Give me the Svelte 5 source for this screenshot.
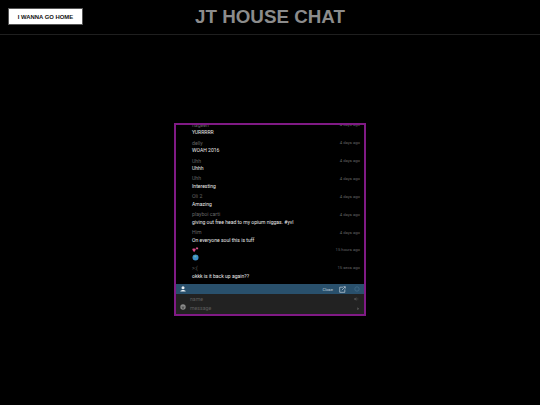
<script>
  const messages = [
    { name: 'nageeh', time: '4 days ago', text: 'YURRRRR' },
    { name: 'delly', time: '4 days ago', text: 'WOAH 2016' },
    { name: 'Uhh', time: '4 days ago', text: 'Uhhh' },
    { name: 'Uhh', time: '4 days ago', text: 'Interesting' },
    { name: 'Oli 2', time: '4 days ago', text: 'Amazing' },
    { name: 'playboi carti', time: '4 days ago', text: 'giving out free head to my opium niggas. #yvl' },
    { name: 'Him', time: '4 days ago', text: 'On everyone soul this is tuff' },
    { name: null, time: '15 hours ago', text: null },
    { name: '>:(', time: '15 secs ago', text: 'okkk is it back up again??' }
  ];
</script>

<div class="page">
  <header class="top">
    <button class="home">I WANNA GO HOME</button>
    <h1>JT HOUSE CHAT</h1>
  </header>
  <main class="stage">
    <section class="chat">
      <div class="list">
        {#each messages as m}
          <article class="msg">
            <div class="head">
              {#if m.name !== null}
                <span class="name">{m.name}</span>
              {:else}
                <svg class="emoji" viewBox="0 0 8 7">
                  <path d="M1 4.6 C-.4 3.4 1 1.6 2.4 2.7 C3.6 1.8 5 3.4 3.8 4.7 L2.4 6.6Z" fill="#d8488a" />
                  <path d="M4.6 2.4 C4 1.4 5.2.6 5.8 1.4 C6.6.8 7.6 1.8 6.9 2.6 L5.7 3.7Z" fill="#e0558f" />
                </svg>
              {/if}
              <span class="time">{m.time}</span>
            </div>
            <div class="text">
              {#if m.text !== null}
                {m.text}
              {:else}
                <svg class="emoji" viewBox="0 0 7 7">
                  <circle cx="3.5" cy="3.5" r="3" fill="#3b8ec9" />
                  <path d="M2 2 L4 1.4 L4.4 3 L2.8 3.6Z" fill="#6fb3a0" />
                </svg>
              {/if}
            </div>
          </article>
        {/each}
      </div>
      <div class="bar">
        <svg class="user" viewBox="0 0 6 6"><circle cx="3" cy="1.7" r="1.5" fill="#e8eef2" /><path d="M.3 5.6 C.5 3.6 5.5 3.6 5.7 5.6Z" fill="#e8eef2" /></svg>
        <span class="close">Close</span>
        <svg class="popout" viewBox="0 0 7 7" fill="none" stroke="#c5d3dd" stroke-width=".7"><path d="M4 1.2 H.7 V6.3 H5.8 V3.4" /><path d="M2.8 4.2 L6.2.8 M4.4.7 H6.3 V2.6" /></svg>
        <svg class="ring" viewBox="0 0 6 6" fill="none" stroke="#47708c" stroke-width=".7"><circle cx="3" cy="3" r="2.2" /></svg>
      </div>
      <div class="form">
        <div class="side">
          <svg class="smile" viewBox="0 0 6 6"><circle cx="3" cy="3" r="2.7" fill="#8a8a8a" /><circle cx="2.1" cy="2.3" r=".4" fill="#222" /><circle cx="3.9" cy="2.3" r=".4" fill="#222" /><path d="M1.6 3.5 C2.2 4.7 3.8 4.7 4.4 3.5Z" fill="#222" /></svg>
        </div>
        <div class="fields">
          <div class="row">
            <span>name</span>
            <svg class="sound" viewBox="0 0 6 5"><path d="M0 1.6 H1.2 L3 .2 V4.8 L1.2 3.4 H0Z" fill="#4f4f4f" /><path d="M3.8 1.4 V3.6 M4.8 .8 V4.2" stroke="#444" stroke-width=".5" /></svg>
          </div>
          <div class="row">
            <span>message</span>
            <svg class="send" viewBox="0 0 3 4"><path d="M.3.3 L2.7 2 L.3 3.7Z" fill="#555" /></svg>
          </div>
        </div>
      </div>
    </section>
  </main>
</div>

<style>
  :global(body) {
    margin: 0;
    background: #000;
  }
  .page {
    width: 540px;
    height: 405px;
    background: #000;
    display: flex;
    flex-direction: column;
    overflow: hidden;
  }
  .top {
    height: 34px;
    flex: none;
    border-bottom: 1px solid #1f1f1f;
    position: relative;
    display: flex;
    align-items: center;
    justify-content: center;
  }
  .home {
    position: absolute;
    left: 8px;
    top: 8px;
    width: 75px;
    height: 17px;
    padding: 0;
    background: #fff;
    border: 1px solid #555;
    color: #111;
    font: bold 5.9px "Liberation Sans", Arial, sans-serif;
  }
  h1 {
    margin: 0;
    font: bold 18.8px "Liberation Sans", Arial, sans-serif;
    color: #8c8c8c;
  }
  .stage {
    flex: 1;
    display: flex;
    justify-content: center;
    padding-top: 88px;
  }
  .chat {
    width: 192px;
    height: 193px;
    box-sizing: border-box;
    border: 2px solid #801a85;
    background: #000;
    display: flex;
    flex-direction: column;
    font-family: Roboto, sans-serif;
  }
  .list {
    flex: 1;
    min-height: 0;
    overflow: hidden;
    display: flex;
    flex-direction: column;
    justify-content: flex-end;
    padding: 0 4px 2px 16px;
  }
  .msg {
    flex: none;
    height: 17.9px;
  }
  .head {
    height: 7.5px;
    display: flex;
    align-items: center;
    justify-content: space-between;
  }
  .name {
    font-size: 5.2px;
    color: #666;
  }
  .time {
    font-size: 4.2px;
    color: #666;
  }
  .text {
    height: 8px;
    line-height: 8px;
    font-size: 5.05px;
    color: #ececec;
    white-space: nowrap;
  }
  .emoji {
    width: 7px;
    height: 7px;
    display: block;
  }
  .bar {
    flex: none;
    height: 10px;
    background: #29506c;
    display: flex;
    align-items: center;
    padding: 0 4px;
  }
  .user {
    width: 6px;
    height: 6px;
  }
  .close {
    margin-left: auto;
    font-size: 4.2px;
    color: #c5d3dd;
  }
  .popout {
    width: 7px;
    height: 7px;
    margin-left: 6px;
  }
  .ring {
    width: 6px;
    height: 6px;
    margin-left: 8px;
  }
  .form {
    flex: none;
    height: 20px;
    background: #222;
    display: flex;
  }
  .side {
    width: 14px;
    flex: none;
    display: flex;
    align-items: flex-end;
    padding: 0 0 4px 4px;
    box-sizing: border-box;
  }
  .smile {
    width: 6px;
    height: 6px;
  }
  .fields {
    flex: 1;
    display: flex;
    flex-direction: column;
    justify-content: center;
    padding: 0 5px 1px 0;
  }
  .row {
    height: 9.5px;
    display: flex;
    align-items: center;
    justify-content: space-between;
    font-size: 5.2px;
    color: #5c5c5c;
  }
  .sound {
    width: 5px;
    height: 4px;
  }
  .send {
    width: 2.5px;
    height: 3.5px;
  }
</style>
